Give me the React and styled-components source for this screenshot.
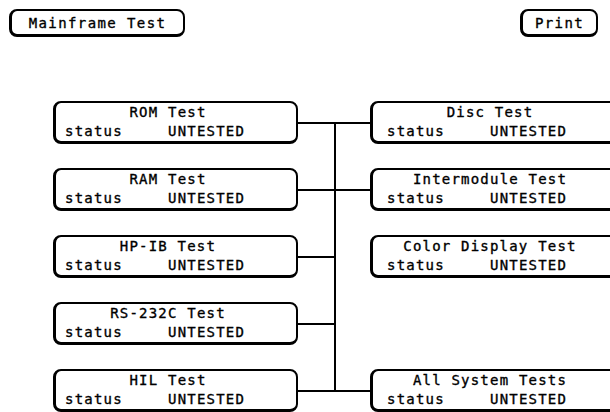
import React from 'react';
import styled, { createGlobalStyle } from 'styled-components';

const GlobalStyle = createGlobalStyle`
  html, body {
    margin: 0;
    padding: 0;
    background: #fff;
    overflow: hidden;
  }
  body {
    font-family: "DejaVu Sans Mono", "Liberation Mono", monospace;
    font-size: 14px;
    color: #000;
    -webkit-text-stroke: 0.35px #000;
  }
`;

const Screen = styled.div`
  width: 610px;
  height: 412px;
  overflow: hidden;
`;

const TopBar = styled.div`
  display: flex;
  justify-content: space-between;
  align-items: flex-start;
  padding: 9px 12px 0 9px;
`;

const SoftKey = styled.button`
  box-sizing: border-box;
  width: ${props => props.width}px;
  height: 28px;
  margin: 0;
  padding: 0;
  border: 2px solid #000;
  border-left-width: 3px;
  border-bottom-width: 3px;
  border-radius: 8px;
  background: #fff;
  font-family: inherit;
  font-size: 14px;
  letter-spacing: 1.4px;
  line-height: 1;
  color: #000;
  text-align: center;
`;

const Diagram = styled.div`
  display: grid;
  grid-template-columns: 245px 72px 250px;
  grid-template-rows: repeat(5, 43px);
  row-gap: 24px;
  margin: 64px 0 0 53px;
`;

const TestBox = styled.div`
  box-sizing: border-box;
  grid-column: ${props => (props.side === 'right' ? 3 : 1)};
  grid-row: ${props => props.row};
  height: 43px;
  border: 2px solid #000;
  border-left-width: 3px;
  border-bottom-width: 3px;
  border-radius: 8px;
  padding-left: ${props => (props.side === 'right' ? 14 : 9)}px;
  line-height: 19px;
  letter-spacing: 1.2px;
  white-space: pre;
`;

const Title = styled.div`
  width: 206px;
  text-align: center;
`;

const StatusRow = styled.div`
  display: flex;
`;

const StatusLabel = styled.span`
  width: 103px;
`;

const Wires = styled.svg`
  grid-column: 2;
  grid-row: 1 / 6;
  display: block;
`;

const leftTests = ['ROM Test', 'RAM Test', 'HP-IB Test', 'RS-232C Test', 'HIL Test'];
const rightTests = [
  { row: 1, name: 'Disc Test' },
  { row: 2, name: 'Intermodule Test' },
  { row: 3, name: 'Color Display Test', detached: true },
  { row: 5, name: 'All System Tests' },
];

const PITCH = 67;
const MID = 22;

function Test({ name, status, side, row }) {
  return (
    <TestBox side={side} row={row}>
      <Title>{name}</Title>
      <StatusRow>
        <StatusLabel>status</StatusLabel>
        <span>{status}</span>
      </StatusRow>
    </TestBox>
  );
}

export default function App() {
  const lastY = (leftTests.length - 1) * PITCH + MID;
  return (
    <Screen>
      <GlobalStyle />
      <TopBar>
        <SoftKey width={176}>Mainframe Test</SoftKey>
        <SoftKey width={78}>Print</SoftKey>
      </TopBar>
      <Diagram>
        {leftTests.map((name, i) => (
          <Test key={name} name={name} status="UNTESTED" side="left" row={i + 1} />
        ))}
        <Wires width="72" height="311" viewBox="0 0 72 311">
          <line x1="37" y1={MID} x2="37" y2={lastY} stroke="#000" strokeWidth="2" />
          {leftTests.map((name, i) => (
            <line key={name} x1="0" y1={i * PITCH + MID} x2="37" y2={i * PITCH + MID} stroke="#000" strokeWidth="2" />
          ))}
          {rightTests.filter(t => !t.detached).map(t => (
            <line
              key={t.name}
              x1="37"
              y1={(t.row - 1) * PITCH + MID}
              x2="72"
              y2={(t.row - 1) * PITCH + MID}
              stroke="#000"
              strokeWidth="2"
            />
          ))}
        </Wires>
        {rightTests.map(t => (
          <Test key={t.name} name={t.name} status="UNTESTED" side="right" row={t.row} />
        ))}
      </Diagram>
    </Screen>
  );
}
